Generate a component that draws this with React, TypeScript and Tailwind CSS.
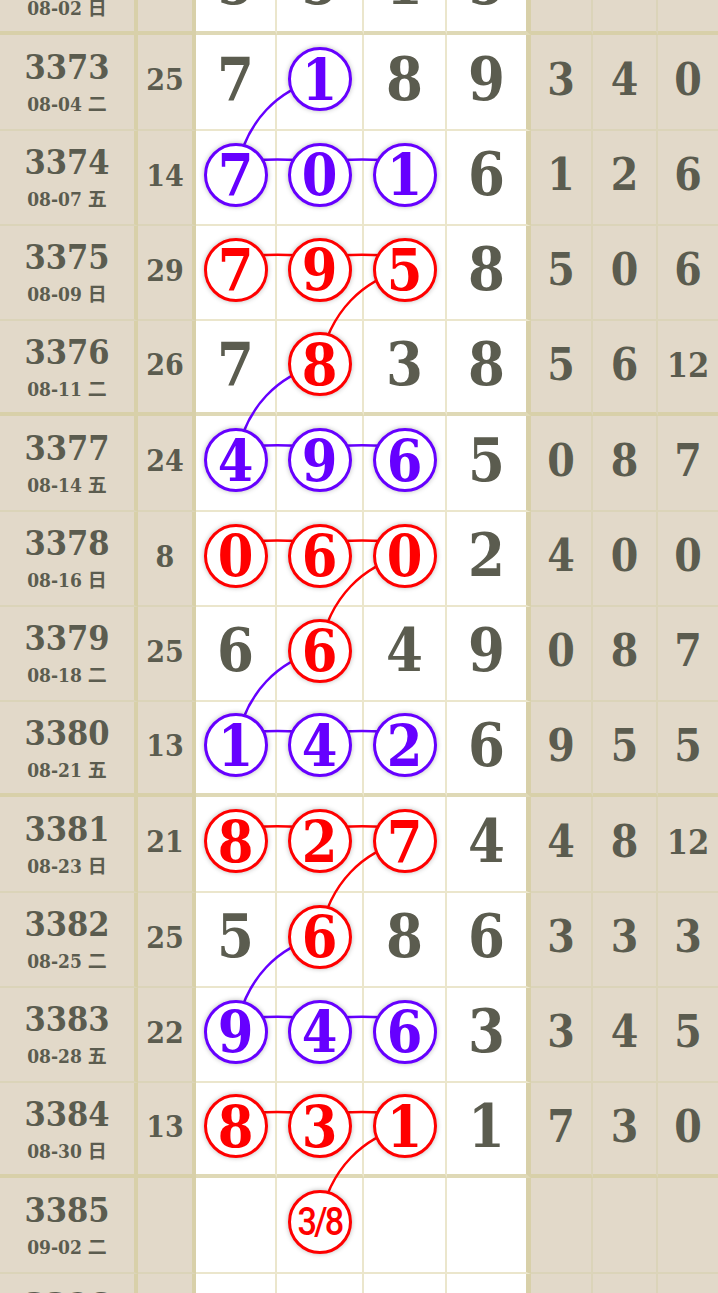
import React from "react";

type Mark = "p" | "r" | "";
type Ball = { v: string; m: Mark };

type Draw = {
  no: string;
  date: string;
  wd: string;
  sum: string;
  balls: Ball[];
  tail: string[];
  end?: boolean;
};

const ROW = 95.25;
const CY = 44;
const XS = [235.5, 319.5, 404.5];
const PURPLE = "#6600ff";
const RED = "#ff0000";

// "7 1p 8 9" -> balls
const parse = (s: string): Ball[] =>
  s.split(" ").map((t) => {
    if (t === "-") return { v: "", m: "" };
    const last = t.slice(-1);
    if (last === "p" || last === "r") return { v: t.slice(0, -1), m: last };
    return { v: t, m: "" };
  });

const mk = (
  no: string,
  date: string,
  wd: string,
  sum: string,
  balls: string,
  tail: string,
  end = false
): Draw => ({
  no,
  date,
  wd,
  sum,
  balls: parse(balls),
  tail: tail ? tail.split(" ") : ["", "", ""],
  end,
});

const rows: Draw[] = [
  mk("3372", "08-02", "日", "16", "5 5 1 5", "5 1 5", true),
  mk("3373", "08-04", "二", "25", "7 1p 8 9", "3 4 0"),
  mk("3374", "08-07", "五", "14", "7p 0p 1p 6", "1 2 6"),
  mk("3375", "08-09", "日", "29", "7r 9r 5r 8", "5 0 6"),
  mk("3376", "08-11", "二", "26", "7 8r 3 8", "5 6 12", true),
  mk("3377", "08-14", "五", "24", "4p 9p 6p 5", "0 8 7"),
  mk("3378", "08-16", "日", "8", "0r 6r 0r 2", "4 0 0"),
  mk("3379", "08-18", "二", "25", "6 6r 4 9", "0 8 7"),
  mk("3380", "08-21", "五", "13", "1p 4p 2p 6", "9 5 5", true),
  mk("3381", "08-23", "日", "21", "8r 2r 7r 4", "4 8 12"),
  mk("3382", "08-25", "二", "25", "5 6r 8 6", "3 3 3"),
  mk("3383", "08-28", "五", "22", "9p 4p 6p 3", "3 4 5"),
  mk("3384", "08-30", "日", "13", "8r 3r 1r 1", "7 3 0", true),
  mk("3385", "09-02", "二", "", "- 3/8r - -", ""),
  mk("3386", "09-04", "四", "", "- - - -", ""),
];

// trend links between rows: [fromRow, fromCol, toRow, toCol, colour]
const links: [number, number, number, number, string][] = [
  [1, 1, 2, 0, PURPLE],
  [3, 2, 4, 1, RED],
  [4, 1, 5, 0, PURPLE],
  [6, 2, 7, 1, RED],
  [7, 1, 8, 0, PURPLE],
  [9, 2, 10, 1, RED],
  [10, 1, 11, 0, PURPLE],
  [12, 2, 13, 1, RED],
];

const serif = "font-['DejaVu_Serif_Condensed','DejaVu_Serif',serif] font-bold font-stretch-condensed";

const Circle = ({ ball }: { ball: Ball }) => {
  const frac = ball.v.includes("/");
  return (
    <div
      className={`relative z-10 flex h-16 w-16 items-center justify-center rounded-full border-[3px] bg-white shadow-[0_0_5px_rgba(0,0,0,0.28)] ${
        ball.m === "p" ? "border-[#6600ff] text-[#6600ff]" : "border-[#ff0000] text-[#ff0000]"
      }`}
    >
      {frac ? (
        <span className="font-['Roboto',sans-serif] text-[38px] leading-none font-medium tracking-[-3px] scale-x-90">
          {ball.v}
        </span>
      ) : (
        <span className={`${serif} text-[57px] leading-none`}>{ball.v}</span>
      )}
    </div>
  );
};

const TrendLines = () => {
  const y = (i: number) => i * ROW + CY;
  const paths: { d: string; c: string }[] = [];
  links.forEach(([r1, c1, r2, c2, c]) => {
    const ax = XS[c1];
    const ay = y(r1);
    const bx = XS[c2];
    const by = y(r2);
    paths.push({
      d: `M ${ax} ${ay} C ${ax - 40} ${ay + 10}, ${bx + 10} ${by - 55}, ${bx} ${by}`,
      c,
    });
  });
  rows.forEach((r, i) => {
    const marked = r.balls.slice(0, 3).filter((b) => b.m).length;
    if (marked !== 3) return;
    const c = r.balls[0].m === "p" ? PURPLE : RED;
    for (let k = 0; k < 2; k++) {
      const x1 = XS[k];
      const x2 = XS[k + 1];
      const yy = y(i) - 13;
      paths.push({ d: `M ${x1} ${yy} Q ${(x1 + x2) / 2} ${yy - 4} ${x2} ${yy}`, c });
    }
  });
  return (
    <svg className="pointer-events-none absolute inset-0 h-full w-full" fill="none">
      {paths.map((p, i) => (
        <path key={i} d={p.d} stroke={p.c} strokeWidth={2.5} />
      ))}
    </svg>
  );
};

const DrawRow = ({ r }: { r: Draw }) => {
  const tanB = r.end ? "border-b-4 border-b-[#d8d0a9]" : "border-b-2 border-b-[#dbd4b9]";
  const whiteB = r.end ? "border-b-4 border-b-[#dfd9b6]" : "border-b-2 border-b-[#ebe6cc]";
  return (
    <div className="grid h-[95.25px] grid-cols-[138px_58px_81px_87px_83px_84px_62px_65px_60px] text-[#5b5c4f]">
      <div
        className={`flex flex-col items-center justify-center bg-[#e2d9c9] border-r-4 border-r-[#d8d0a9] ${tanB}`}
      >
        <span className={`${serif} text-[34px] leading-[36px]`}>{r.no}</span>
        <span className={`${serif} mt-[7px] text-[19px] leading-[22px]`}>
          {r.date}{" "}
          <span className="font-['Noto_Sans_CJK_SC',sans-serif] font-bold">{r.wd}</span>
        </span>
      </div>
      <div
        className={`flex items-center justify-center bg-[#e2d9c9] pb-[3px] border-r-4 border-r-[#d8d0a9] ${tanB}`}
      >
        <span className={`${serif} text-[30px] leading-none`}>{r.sum}</span>
      </div>
      {r.balls.map((b, k) => (
        <div
          key={k}
          className={`flex items-center justify-center bg-white pb-[5px] ${
            k === 3 ? "border-r-[5px] border-r-[#d8d0a9]" : "border-r-2 border-r-[#ebe6cc]"
          } ${whiteB}`}
        >
          {b.m ? (
            <Circle ball={b} />
          ) : (
            <span className={`${serif} text-[59px] leading-none`}>{b.v}</span>
          )}
        </div>
      ))}
      {r.tail.map((t, k) => (
        <div
          key={k}
          className={`flex items-center justify-center bg-[#e2d9c9] pb-[4px] ${
            k < 2 ? "border-r-2 border-r-[#dbd4b9]" : ""
          } ${tanB}`}
        >
          <span className={`${serif} leading-none ${t.length > 1 ? "text-[34px]" : "text-[44px]"}`}>
            {t}
          </span>
        </div>
      ))}
    </div>
  );
}

export default function App() {
  return (
    <div className="h-[1293px] w-[718px] overflow-hidden bg-white">
      <div className="relative -mt-[60px]">
        {rows.map((r) => (
          <DrawRow key={r.no} r={r} />
        ))}
        <TrendLines />
      </div>
    </div>
  );
}
